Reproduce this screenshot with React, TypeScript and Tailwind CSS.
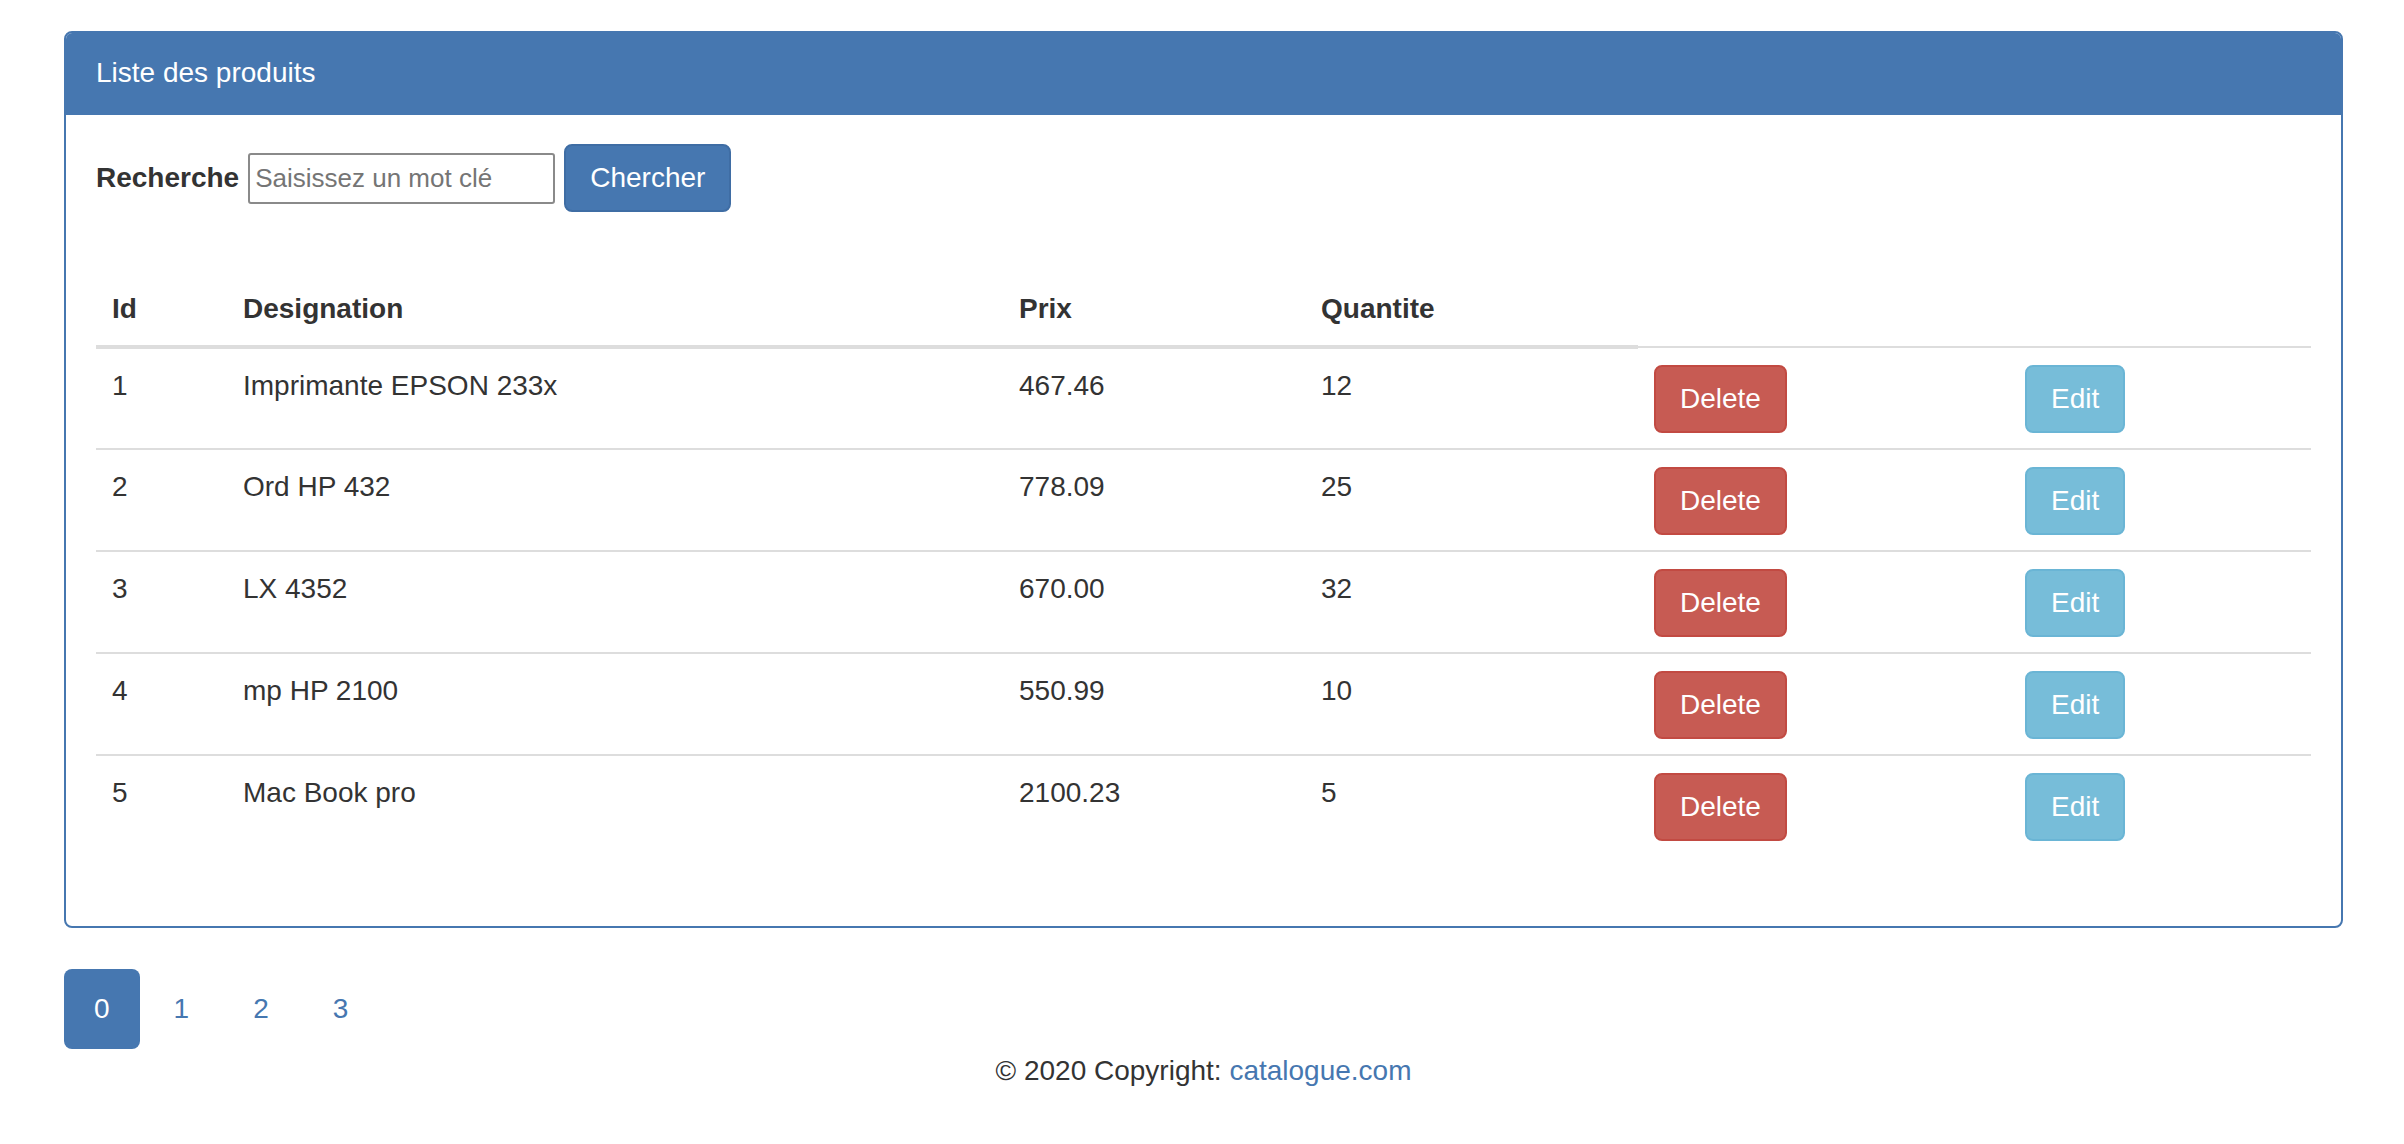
const produits = [
  { id: 1, designation: "Imprimante EPSON 233x", prix: "467.46", quantite: 12 },
  { id: 2, designation: "Ord HP 432", prix: "778.09", quantite: 25 },
  { id: 3, designation: "LX 4352", prix: "670.00", quantite: 32 },
  { id: 4, designation: "mp HP 2100", prix: "550.99", quantite: 10 },
  { id: 5, designation: "Mac Book pro", prix: "2100.23", quantite: 5 },
];

export default function App() {
  return (
    <div className="min-h-screen bg-white font-['Liberation_Sans',Arial,sans-serif] text-[28px] leading-[40px] text-[#333]">
      <div className="pl-[64px] pr-[61px] pt-[31px]">
        {/* panel */}
        <div className="mb-[41px] rounded-[8px] border-2 border-[#4677b0] overflow-hidden">
          <div className="bg-[#4677b0] border-b-2 border-[#4677b0] px-[30px] py-[20px] text-white">
            Liste des produits
          </div>
          <div className="p-[30px] pt-[29px]">
            <form className="flex items-center h-[68px]" onSubmit={(e) => e.preventDefault()}>
              <label className="font-bold">Recherche</label>
              <input
                type="text"
                placeholder="Saisissez un mot clé"
                className="ml-[9px] w-[307px] h-[51px] border-2 border-[#8a8a8a] rounded-[3px] px-[5px] text-[26px] placeholder:text-[#757575] outline-none"
              />
              <button
                type="submit"
                className="ml-[9px] h-[68px] px-[24px] rounded-[8px] border-2 border-[#3f6da4] bg-[#4677b0] text-white"
              >
                Chercher
              </button>
            </form>

            <table className="mt-[61px] w-full border-collapse table-fixed">
              <colgroup>
                <col className="w-[131px]" />
                <col className="w-[776px]" />
                <col className="w-[302px]" />
                <col className="w-[333px]" />
                <col className="w-[371px]" />
                <col />
              </colgroup>
              <thead>
                <tr>
                  <th className="p-[16px] text-left align-bottom border-b-4 border-[#ddd]">Id</th>
                  <th className="p-[16px] text-left align-bottom border-b-4 border-[#ddd]">Designation</th>
                  <th className="p-[16px] text-left align-bottom border-b-4 border-[#ddd]">Prix</th>
                  <th className="p-[16px] text-left align-bottom border-b-4 border-[#ddd]">Quantite</th>
                </tr>
              </thead>
              <tbody>
                {produits.map((p) => (
                  <tr key={p.id}>
                    <td className="p-[16px] pt-[17px] align-top border-t-2 border-[#ddd]">{p.id}</td>
                    <td className="p-[16px] pt-[17px] align-top border-t-2 border-[#ddd]">{p.designation}</td>
                    <td className="p-[16px] pt-[17px] align-top border-t-2 border-[#ddd]">{p.prix}</td>
                    <td className="p-[16px] pt-[17px] align-top border-t-2 border-[#ddd]">{p.quantite}</td>
                    <td className="p-[16px] pt-[17px] pb-[15px] align-top border-t-2 border-[#ddd]">
                      <button className="h-[68px] px-[24px] rounded-[8px] border-2 border-[#c24a42] bg-[#c75b53] text-white">
                        Delete
                      </button>
                    </td>
                    <td className="p-[16px] pt-[17px] pb-[15px] align-top border-t-2 border-[#ddd]">
                      <button className="h-[68px] px-[24px] rounded-[8px] border-2 border-[#6ab5d5] bg-[#77bdd9] text-white">
                        Edit
                      </button>
                    </td>
                  </tr>
                ))}
              </tbody>
            </table>
            <div className="h-[40px]" />
          </div>
        </div>

        {/* pagination */}
        <ul className="flex gap-[4px]">
          {[0, 1, 2, 3].map((n) => (
            <li key={n}>
              <a
                href="#"
                className={
                  n === 0
                    ? "block h-[80px] px-[30px] py-[20px] rounded-[8px] bg-[#4677b0] text-white"
                    : "block h-[80px] px-[30px] py-[20px] rounded-[8px] text-[#4677b0]"
                }
              >
                {n}
              </a>
            </li>
          ))}
        </ul>

        <footer className="mt-[2px] text-center">
          © 2020 Copyright: <a href="#" className="text-[#4677b0]">catalogue.com</a>
        </footer>
      </div>
    </div>
  );
}
